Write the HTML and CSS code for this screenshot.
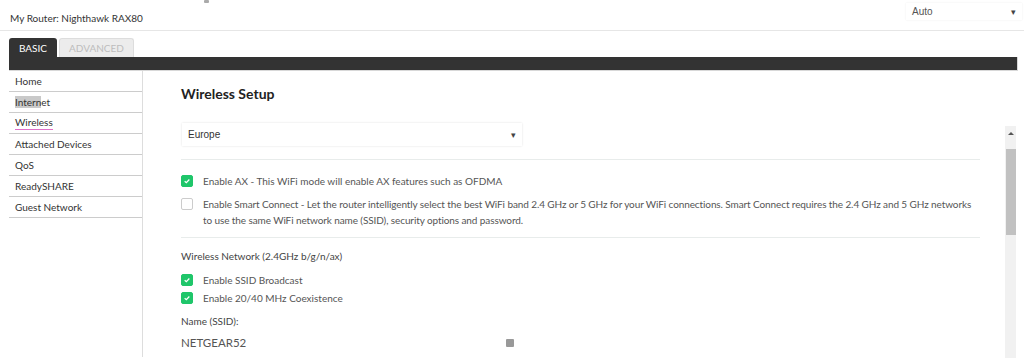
FILE: index.html
```html
<!DOCTYPE html>
<html>
<head>
<meta charset="utf-8">
<link rel="stylesheet" href="styles.css">
</head>
<body>
<div class="cursor"></div>
<header class="top">
  <div class="router">My Router: Nighthawk RAX80</div>
  <div class="lang">Auto<span class="arrow">▾</span></div>
</header>
<nav class="tabs">
  <div class="tab active">BASIC</div>
  <div class="tab">ADVANCED</div>
</nav>
<div class="darkbar"></div>
<div class="main">
  <aside class="side">
    <div class="item">Home</div>
    <div class="item"><span class="sel">Intern</span>et</div>
    <div class="item"><span class="uline">Wireless</span></div>
    <div class="item">Attached Devices</div>
    <div class="item">QoS</div>
    <div class="item">ReadySHARE</div>
    <div class="item">Guest Network</div>
  </aside>
  <section class="content">
    <h1 class="title">Wireless Setup</h1>
    <div class="body">
      <div class="form">
        <div class="select">Europe<span class="arrow">▾</span></div>
        <div class="rule"></div>
        <div class="check first"><span class="box on"><svg viewBox="0 0 12 12" width="12" height="12"><path d="M3.2 6.2 L5.2 8 L8.8 4.2" fill="none" stroke="#fff" stroke-width="1.5"/></svg></span><span>Enable AX - This WiFi mode will enable AX features such as OFDMA</span></div>
        <div class="check long"><span class="box"></span><span>Enable Smart Connect - Let the router intelligently select the best WiFi band 2.4 GHz or 5 GHz for your WiFi connections. Smart Connect requires the 2.4 GHz and 5 GHz networks to use the same WiFi network name (SSID), security options and password.</span></div>
        <div class="rule r2"></div>
        <div class="label">Wireless Network (2.4GHz b/g/n/ax)</div>
        <div class="check tight"><span class="box on"><svg viewBox="0 0 12 12" width="12" height="12"><path d="M3.2 6.2 L5.2 8 L8.8 4.2" fill="none" stroke="#fff" stroke-width="1.5"/></svg></span><span>Enable SSID Broadcast</span></div>
        <div class="check tight"><span class="box on"><svg viewBox="0 0 12 12" width="12" height="12"><path d="M3.2 6.2 L5.2 8 L8.8 4.2" fill="none" stroke="#fff" stroke-width="1.5"/></svg></span><span>Enable 20/40 MHz Coexistence</span></div>
        <div class="label name">Name (SSID):</div>
        <div class="ssid"><span>NETGEAR52</span><span class="kbd"></span></div>
      </div>
      <div class="scroll"><div class="up"></div><div class="thumb"></div></div>
    </div>
  </section>
</div>
</body>
</html>
```
FILE: styles.css
```css
html, body { margin: 0; padding: 0; background: #fff; }
body { font-family: Lato, "Open Sans", sans-serif; color: #333; width: 1024px; height: 358px; overflow: hidden; position: relative; }
.cursor { position: absolute; left: 204px; top: 0; width: 5px; height: 3px; background: #aaa; border-radius: 1px; }
.top { height: 30px; border-bottom: 1px solid #e6e6e6; display: flex; justify-content: space-between; align-items: flex-start; }
.router { font-size: 10px; padding: 12px 0 0 10px; color: #333; }
.lang { margin: 3px 2px 0 0; width: 104px; height: 17px; padding: 0 6px; box-shadow: 0 0 2px rgba(0,0,0,0.07); font-family: "Liberation Sans", Arial, sans-serif; font-size: 10px; color: #555; display: flex; justify-content: space-between; align-items: center; }
.arrow { font-size: 9px; color: #444; }
.tabs { display: flex; gap: 2px; padding: 7px 0 0 9px; height: 19px; }
.tab { height: 19px; border-radius: 3px 3px 0 0; font-size: 10px; display: flex; align-items: center; justify-content: center; }
.tab.active { width: 48px; background: #333; color: #fff; }
.tab:not(.active) { width: 73px; background: #ececec; border: 1px solid #ddd; border-bottom: 0; height: 18px; color: #bdbdbd; }
.darkbar { margin-left: 9px; width: 1008px; height: 13px; background: #333; border: 1px solid #d8d8d8; border-left: 0; border-top: 0; }
.main { display: flex; height: 286px; }
.side { width: 133px; margin-left: 9px; border-right: 1px solid #ddd; }
.item { height: 20px; border-bottom: 1px solid #ccc; font-size: 10px; padding-left: 6px; display: flex; align-items: center; color: #333; }
.sel { background: #c9c9c9; }
.uline { border-bottom: 1px solid #e070c8; line-height: 13px; }
.content { flex: 1; padding-left: 38px; display: flex; flex-direction: column; }
.title { font-size: 14px; font-weight: bold; margin: 13px 0 0 0; height: 20px; line-height: 20px; color: #222; }
.body { display: flex; margin-top: 19px; }
.form { width: 799px; }
.select { width: 328px; height: 23px; margin-left: 1px; padding: 0 6px; box-shadow: 0 0 2px rgba(0,0,0,0.12); font-family: "Liberation Sans", Arial, sans-serif; font-size: 10px; color: #333; display: flex; justify-content: space-between; align-items: center; }
.rule { height: 1px; background: #e8eceb; margin-top: 13px; }
.rule.r2 { margin-top: 9px; }
.check { display: flex; gap: 10px; font-size: 10px; color: #555; line-height: 16px; margin-top: 7px; }
.check.long { letter-spacing: -0.1px; }
.check.first { margin-top: 13px; }
.check.tight { margin-top: 2px; }
.check + .check:not(.tight) { margin-top: 7px; }
.box { flex: none; width: 10px; height: 10px; border: 1px solid #ccc; border-radius: 2px; margin-top: 2px; background: #fff; display: flex; align-items: center; justify-content: center; }
.box.on { background: #1fc66a; border-color: #1fc66a; }
.label { font-size: 10px; color: #444; margin-top: 10px; height: 17px; line-height: 17px; margin-bottom: 7px; }
.label.name { margin-top: 7px; margin-bottom: 4px; }
.ssid { display: flex; align-items: center; font-size: 11.5px; color: #555; margin-top: 6px; }
.ssid span:first-child { width: 325px; }
.kbd { width: 8px; height: 8px; background: #999; border-radius: 1px; }
.scroll { margin: 3px 0 0 25px; width: 11px; height: 232px; background: #f1f1f1; }
.up { height: 0; width: 0; margin: 6px auto 0; border-left: 3px solid transparent; border-right: 3px solid transparent; border-bottom: 3px solid #555; }
.thumb { margin: 14px auto 0; width: 10px; height: 86px; background: #c1c1c1; }
```
